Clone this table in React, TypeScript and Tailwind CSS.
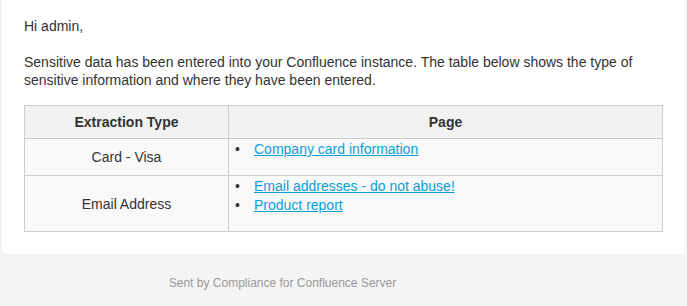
import React from "react";

const font = { fontFamily: '"Liberation Sans", Arial, sans-serif' };

function Item({ children }: { children: React.ReactNode }) {
  return (
    <li className="flex leading-[19px]">
      <span className="w-[19px] shrink-0 text-[#333333]">•</span>
      <a href="#" className="text-[#0b9fdb] underline">{children}</a>
    </li>
  );
}

export default function App() {
  return (
    <div className="w-[687px] h-[306px] bg-[#f4f4f4] overflow-hidden" style={font}>
      <div className="mx-[2px] bg-white rounded-b-[4px] px-[22px] pt-[17px] pb-[22px] text-[14px] leading-[18px] text-[#333333]">
        <p className="m-0">Hi admin,</p>
        <p className="mt-[18px] mb-0">
          Sensitive data has been entered into your Confluence instance. The table below shows the type of
          sensitive information and where they have been entered.
        </p>
        <table className="mt-[16px] w-full border-collapse border border-[#cccccc]">
          <thead>
            <tr className="bg-[#f2f2f2]">
              <th className="w-[204px] h-[33px] border border-[#cccccc] font-bold text-center align-middle">
                Extraction Type
              </th>
              <th className="h-[33px] border border-[#cccccc] font-bold text-center align-middle">Page</th>
            </tr>
          </thead>
          <tbody className="bg-[#f9f9f9]">
            <tr>
              <td className="border border-[#cccccc] text-center align-middle">Card - Visa</td>
              <td className="border border-[#cccccc] align-top pt-[1px] pb-[16px]">
                <ul className="m-0 pl-[6px] list-none">
                  <Item>Company card information</Item>
                </ul>
              </td>
            </tr>
            <tr>
              <td className="border border-[#cccccc] text-center align-middle">Email Address</td>
              <td className="border border-[#cccccc] align-top pt-[1px] pb-[16px]">
                <ul className="m-0 pl-[6px] list-none">
                  <Item>Email addresses - do not abuse!</Item>
                  <Item>Product report</Item>
                </ul>
              </td>
            </tr>
          </tbody>
        </table>
      </div>
      <div className="w-[565px] text-center text-[12px] leading-[14px] text-[#999999] pt-[22px]">
        Sent by Compliance for Confluence Server
      </div>
    </div>
  );
}
